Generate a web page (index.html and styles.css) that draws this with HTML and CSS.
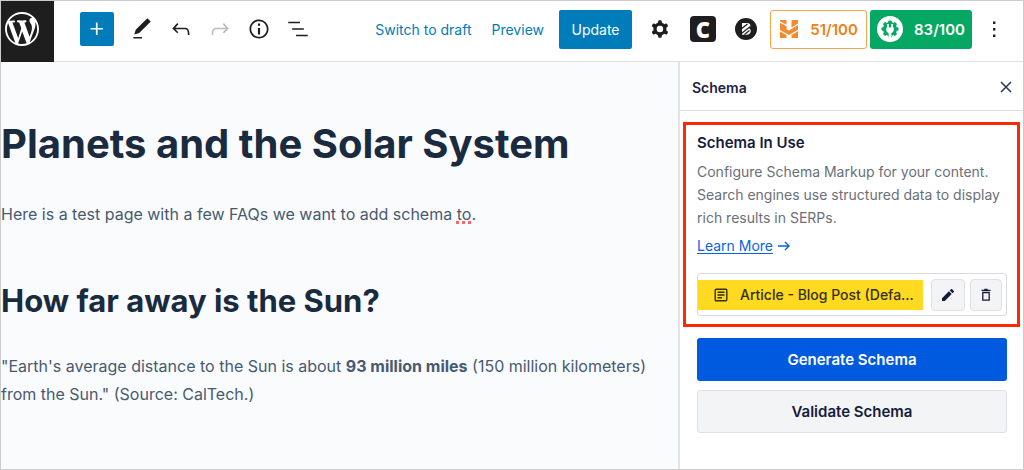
FILE: index.html
```html
<!DOCTYPE html>
<html lang="en">
<head>
<meta charset="utf-8">
<title>Edit Post</title>
<link rel="stylesheet" href="styles.css">
</head>
<body>
<div class="editor">
  <header class="topbar">
    <a class="site-logo" href="#" aria-label="View posts">
      <svg width="34" height="34" viewBox="0 0 20 20" fill="currentColor"><path d="M20 10c0-5.51-4.49-10-10-10C4.48 0 0 4.49 0 10c0 5.52 4.48 10 10 10 5.51 0 10-4.48 10-10zM7.78 15.37L4.37 6.22c.55-.02 1.17-.08 1.17-.08.5-.06.44-1.13-.06-1.11 0 0-1.45.11-2.37.11-.18 0-.37 0-.58-.01C4.12 2.69 6.87 1.11 10 1.11c2.33 0 4.45.87 6.05 2.34-.68-.11-1.65.39-1.65 1.58 0 .74.45 1.36.9 2.1.35.61.55 1.36.55 2.46 0 1.49-1.4 5-1.4 5l-3.03-8.37c.54-.02.82-.17.82-.17.5-.05.44-1.25-.06-1.22 0 0-1.44.12-2.38.12-.87 0-2.33-.12-2.33-.12-.5-.03-.56 1.2-.06 1.22l.92.08 1.26 3.41zM17.41 10c.24-.64.74-1.87.43-4.25.7 1.29 1.05 2.71 1.05 4.25 0 3.29-1.73 6.24-4.4 7.78.97-2.59 1.94-5.2 2.92-7.78zM6.1 18.09C3.12 16.65 1.11 13.53 1.11 10c0-1.3.23-2.48.72-3.59C3.25 10.3 4.67 14.2 6.1 18.09zm4.03-6.63l2.58 6.98c-.86.29-1.76.45-2.71.45-.79 0-1.57-.11-2.29-.33.81-2.38 1.62-4.74 2.42-7.1z"/></svg>
    </a>
    <div class="tools">
      <button class="add" aria-label="Add block"><svg width="26" height="26" viewBox="0 0 24 24" fill="currentColor"><path d="M11 12.5V17.5H12.5V12.5H17.5V11H12.5V6H11V11H6V12.5H11Z"/></svg></button>
      <div class="tool-group">
        <button class="tool" aria-label="Tools"><svg width="26" height="26" viewBox="0 0 24 24" fill="currentColor"><path d="M20.1 5.1L16.9 2 6.2 12.7l-1.3 4.4 4.5-1.3L20.1 5.1zM4 20.8h8v-1.5H4v1.5z"/></svg></button>
        <button class="tool" aria-label="Undo"><svg width="26" height="26" viewBox="0 0 24 24" fill="currentColor"><path d="M18.3 11.7c-.6-.6-1.4-.9-2.3-.9H6.7l2.9-3.3-1.1-1-4.5 5L8.5 16l1-1-2.7-2.7H16c.5 0 .9.2 1.3.5 1 1 1 3.4 1 4.5v.3h1.5v-.2c0-1.5 0-4.3-1.5-5.7z"/></svg></button>
        <button class="tool tool-off" aria-label="Redo" disabled><svg width="26" height="26" viewBox="0 0 24 24" fill="currentColor"><path d="M15.6 6.5l-1.1 1 2.9 3.3H8c-.9 0-1.7.3-2.3.9-1.4 1.5-1.4 4.2-1.4 5.6v.2h1.5v-.3c0-1.1 0-3.5 1-4.5.3-.3.7-.5 1.3-.5h9.2L14.5 15l1.1 1.1 4.6-4.6-4.6-5z"/></svg></button>
        <button class="tool" aria-label="Details"><svg width="26" height="26" viewBox="0 0 24 24" fill="currentColor"><path d="M12 3.2c-4.8 0-8.8 3.9-8.8 8.8 0 4.8 3.9 8.8 8.8 8.8 4.8 0 8.8-3.9 8.8-8.8 0-4.8-4-8.8-8.8-8.8zm0 16c-4 0-7.2-3.3-7.2-7.2C4.8 8 8 4.8 12 4.8s7.2 3.3 7.2 7.2c0 4-3.2 7.2-7.2 7.2zM11 17h2v-6h-2v6zm0-8h2V7h-2v2z"/></svg></button>
        <button class="tool" aria-label="List view"><svg width="26" height="26" viewBox="0 0 24 24" fill="currentColor"><path d="M13.8 5.2H3v1.5h10.8V5.2zm-3.6 12v1.5H21v-1.5H10.2zm7.2-6H6.6v1.5h10.8v-1.5z"/></svg></button>
      </div>
    </div>
    <div class="actions">
      <div class="post-actions">
        <button class="text-button">Switch to draft</button>
        <button class="text-button">Preview</button>
      </div>
      <button class="update">Update</button>
      <div class="plugins">
        <button class="tool" aria-label="Settings"><svg width="26" height="26" viewBox="0 0 24 24" fill="currentColor"><path fill-rule="evenodd" d="M10.289 4.836A1 1 0 0111.275 4h1.306a1 1 0 01.987.836l.244 1.466c.787.26 1.503.679 2.108 1.218l1.393-.522a1 1 0 011.216.437l.653 1.13a1 1 0 01-.23 1.273l-1.148.944a6.025 6.025 0 010 2.435l1.149.946a1 1 0 01.23 1.272l-.653 1.13a1 1 0 01-1.216.437l-1.394-.522c-.605.54-1.32.958-2.108 1.218l-.244 1.466a1 1 0 01-.987.836h-1.306a1 1 0 01-.986-.836l-.244-1.466a5.995 5.995 0 01-2.108-1.218l-1.394.522a1 1 0 01-1.217-.436l-.653-1.131a1 1 0 01.23-1.272l1.149-.946a6.026 6.026 0 010-2.435l-1.148-.944a1 1 0 01-.23-1.272l.653-1.131a1 1 0 011.217-.437l1.393.522a5.994 5.994 0 012.108-1.218l.244-1.466zM14.929 12a3 3 0 11-6 0 3 3 0 016 0z"/></svg></button>
        <button class="c-badge">C</button>
        <button class="tool" aria-label="Brand tools"><svg width="22" height="22" viewBox="0 0 22 22"><circle cx="11" cy="11" r="11" fill="#1e1e1e"/><path d="M7 5h5.500c3.300 0 3.800 3.900 1.600 5.300 2.900 1.500 1.900 6.400-2.100 6.400H7z" fill="#fff"/><path d="M5.500 11.500l7-5.500M6 15.800l9.500-7.300M9.500 16.500l5-4" fill="none" stroke="#1e1e1e" stroke-width="1.200"/></svg></button>
      </div>
      <div class="scores">
        <button class="score score-seo"><svg width="20" height="20" viewBox="0 0 20 20" fill="#f58a2c"><path d="M1 1h6.500v4.800L1 2.300zM1 3.700l6.500 3.600v3L10 11.500 19 6v4.800L10 16 1 11zM1 12.500l6.500 3.600V19H1zM12.500 1H19v3.500l-6.500 4zM12.500 16l6.500-3.700V19h-6.500z"/></svg><span>51/100</span></button>
        <button class="score score-perf"><svg width="26" height="26" viewBox="0 0 26 26"><circle cx="13" cy="13" r="13" fill="#fff"/><g fill="#05a862"><circle cx="13" cy="13" r="7"/><rect x="11.200" y="4.500" width="3.600" height="17" rx="1"/><rect x="4.500" y="11.200" width="17" height="3.600" rx="1"/><rect x="11.200" y="4.500" width="3.600" height="17" rx="1" transform="rotate(45 13 13)"/><rect x="11.200" y="4.500" width="3.600" height="17" rx="1" transform="rotate(-45 13 13)"/></g><path d="M9.200 11.500h7.600v2c0 1.900-1 3-2.400 3.400V22h-2.800v-5.100c-1.400-.4-2.400-1.500-2.400-3.400zM10 8h1.800v4H10zM14.200 8H16v4h-1.800z" fill="#fff"/></svg><span>83/100</span></button>
      </div>
      <button class="tool" aria-label="Options"><svg width="26" height="26" viewBox="0 0 26 26" fill="currentColor"><path d="M12 5.500h2.400v2.400H12zM12 12h2.400v2.400H12zM12 18.500h2.400v2.400H12z"/></svg></button>
    </div>
  </header>

  <div class="workspace">
    <main class="canvas">
      <h1>Planets and the Solar System</h1>
      <p>Here is a test page with a few FAQs we want to add schema <span class="misspelt">to</span>.</p>
      <h2>How far away is the Sun?</h2>
      <p>"Earth's average distance to the Sun is about <strong>93 million miles</strong> (150 million kilometers) from the Sun." (Source: CalTech.)</p>
    </main>

    <aside class="sidebar">
      <div class="sidebar-head">
        <h2>Schema</h2>
        <button class="close" aria-label="Close"><svg width="12" height="12" viewBox="0 0 12 12" fill="none" stroke="currentColor" stroke-width="1.500"><path d="M1 1l10 10M11 1L1 11"/></svg></button>
      </div>
      <section class="in-use">
        <h3>Schema In Use</h3>
        <p>Configure Schema Markup for your content. Search engines use structured data to display rich results in SERPs.</p>
        <div class="learn"><a href="#">Learn More</a><svg width="12" height="12" viewBox="0 0 12 12" fill="none" stroke="currentColor" stroke-width="1.400"><path d="M0 6h11M7 2l4 4-4 4"/></svg></div>
        <div class="schema-item">
          <div class="schema-name">
            <svg width="14" height="14" viewBox="0 0 14 14" fill="none" stroke="currentColor" stroke-width="1.400"><rect x="1.200" y="1.200" width="11.600" height="11.600" rx="1"/><path d="M3.500 4.300h7M3.500 7h7M3.500 9.700h4.500"/></svg>
            <span>Article - Blog Post (Defa…</span>
          </div>
          <button class="icon-button" aria-label="Edit"><svg width="14" height="14" viewBox="0 0 14 14" fill="currentColor"><path d="M1 10.200V13h2.800l6.900-6.900-2.800-2.800zM12.800 4c.3-.3.3-.8 0-1.100l-1.700-1.700c-.3-.3-.8-.3-1.100 0L8.700 2.500l2.800 2.800z"/></svg></button>
          <button class="icon-button icon-button-small" aria-label="Delete"><svg width="12" height="14" viewBox="0 0 12 14" fill="none" stroke="currentColor" stroke-width="1.300"><path d="M1.500 2.300h9M4.300 1.500h3.400M2.800 4.500h6.400v7.700H2.800z"/></svg></button>
        </div>
      </section>
      <div class="sidebar-actions">
        <button class="primary">Generate Schema</button>
        <button class="secondary">Validate Schema</button>
      </div>
    </aside>
  </div>
</div>
</body>
</html>
```
FILE: styles.css
```css
* {
  box-sizing: border-box;
}

body {
  margin: 0;
  font-family: Inter, "Liberation Sans", sans-serif;
  font-size: 14px;
  color: #1e1e1e;
}

h1, h2, h3, p {
  margin: 0;
}

button {
  margin: 0;
  padding: 0;
  border: 0;
  background: none;
  color: inherit;
  font: inherit;
  display: flex;
  align-items: center;
  justify-content: center;
}

svg {
  display: block;
  flex: none;
}

.editor {
  display: flex;
  flex-direction: column;
  min-height: 100vh;
  border: 1px solid #ccc;
  background: #fff;
}

.topbar {
  display: flex;
  align-items: stretch;
  height: 61px;
  border-bottom: 1px solid #e0e0e0;
}

.site-logo {
  flex: none;
  width: 53px;
  height: 61px;
  padding: 11px 4px;
  background: #1e1e1e;
  color: #fff;
}

.tools {
  display: flex;
  align-items: center;
  gap: 11px;
  height: 56px;
  padding-left: 26px;
}

.add {
  width: 34px;
  height: 34px;
  border-radius: 2px;
  background: #007cba;
  color: #fff;
}

.tool-group {
  display: flex;
  gap: 5px;
}

.tool {
  width: 34px;
  height: 34px;
}

.tool-off {
  color: #bbb;
}

.actions {
  display: flex;
  align-items: center;
  height: 56px;
  margin-left: auto;
  padding-right: 12px;
}

.post-actions {
  display: flex;
  gap: 20px;
  margin-right: 15px;
}

.text-button {
  color: #007cba;
}

.update {
  width: 73px;
  height: 39px;
  margin-right: 11px;
  border-radius: 2px;
  background: #007cba;
  color: #fff;
}

.plugins {
  display: flex;
  align-items: center;
  gap: 13px;
  margin-right: 7px;
}

.c-badge {
  width: 26px;
  height: 26px;
  border-radius: 4px;
  background: #1e1e1e;
  color: #fff;
  font-family: "Open Sans", sans-serif;
  font-size: 22px;
  font-weight: 800;
  line-height: 26px;
}

.scores {
  display: flex;
  gap: 3px;
  margin-right: 5px;
}

.score {
  height: 39px;
  border-radius: 3px;
  font-size: 15px;
  font-weight: 600;
}

.score-seo {
  width: 97px;
  gap: 11px;
  border: 1px solid #f9a34d;
  color: #ee8114;
}

.score-perf {
  width: 102px;
  gap: 11px;
  background: #05a862;
  color: #fff;
}

.workspace {
  display: flex;
  flex: 1;
}

.canvas {
  flex: 1;
  padding: 58px 20px 0 0;
  background: #fafbfd;
  color: #475a6f;
  font-size: 16px;
  line-height: 28px;
}

.canvas h1 {
  margin-bottom: 32px;
  color: #1a2b3f;
  font-size: 40px;
  line-height: 48px;
}

.canvas h2 {
  margin: 53px 0 31px;
  color: #1a2b3f;
  font-size: 31px;
  line-height: 40px;
}

.canvas strong {
  font-weight: 700;
}

.misspelt {
  text-decoration: underline dotted #f66 3px;
  text-underline-offset: 1px;
}

.sidebar {
  flex: none;
  width: 345px;
  border-left: 2px solid #e4e4e4;
  background: #fff;
}

.sidebar-head {
  display: flex;
  align-items: center;
  justify-content: space-between;
  height: 49px;
  padding: 2px 11px 0 12px;
  border-bottom: 1px solid #ddd;
}

.sidebar-head h2 {
  color: #1c2340;
  font-size: 14px;
  font-weight: 600;
}

.close {
  color: #2a3350;
}

.in-use {
  margin: 11px 3px 11px 3px;
  padding: 9px 10px 8px 11px;
  border: 3px solid #fb2a05;
}

.in-use h3 {
  color: #161c3c;
  font-size: 15px;
  font-weight: 600;
  line-height: 18px;
}

.in-use p {
  margin-top: 8px;
  color: #6a6f78;
  line-height: 23px;
}

.learn {
  display: flex;
  align-items: center;
  gap: 5px;
  margin-top: 7px;
  color: #0b62e0;
  line-height: 20px;
}

.learn a {
  color: inherit;
  text-underline-offset: 2px;
}

.schema-item {
  display: flex;
  align-items: center;
  gap: 5px;
  height: 43px;
  margin-top: 17px;
  padding-right: 4px;
  border: 1px solid #d8dade;
  border-radius: 3px;
}

.schema-name {
  display: flex;
  flex: 1;
  align-items: center;
  gap: 12px;
  min-width: 0;
  height: 30px;
  margin-right: 3px;
  padding: 0 6px 0 16px;
  background: #ffda20;
  color: #33300f;
  font-weight: 500;
}

.schema-name span {
  overflow: hidden;
  text-overflow: ellipsis;
  white-space: nowrap;
}

.icon-button {
  flex: none;
  width: 34px;
  height: 32px;
  border: 1px solid #dfe0e4;
  border-radius: 4px;
  background: #f3f4f6;
  color: #161c3c;
}

.icon-button-small {
  width: 32px;
}

.sidebar-actions {
  display: flex;
  flex-direction: column;
  gap: 9px;
  padding: 0 16px 20px 17px;
}

.primary,
.secondary {
  height: 43px;
  border-radius: 3px;
  font-size: 15px;
  font-weight: 600;
}

.primary {
  background: #005ae0;
  color: #fff;
}

.secondary {
  border: 1px solid #dfe0e4;
  background: #f3f4f6;
  color: #161c3c;
}
```
